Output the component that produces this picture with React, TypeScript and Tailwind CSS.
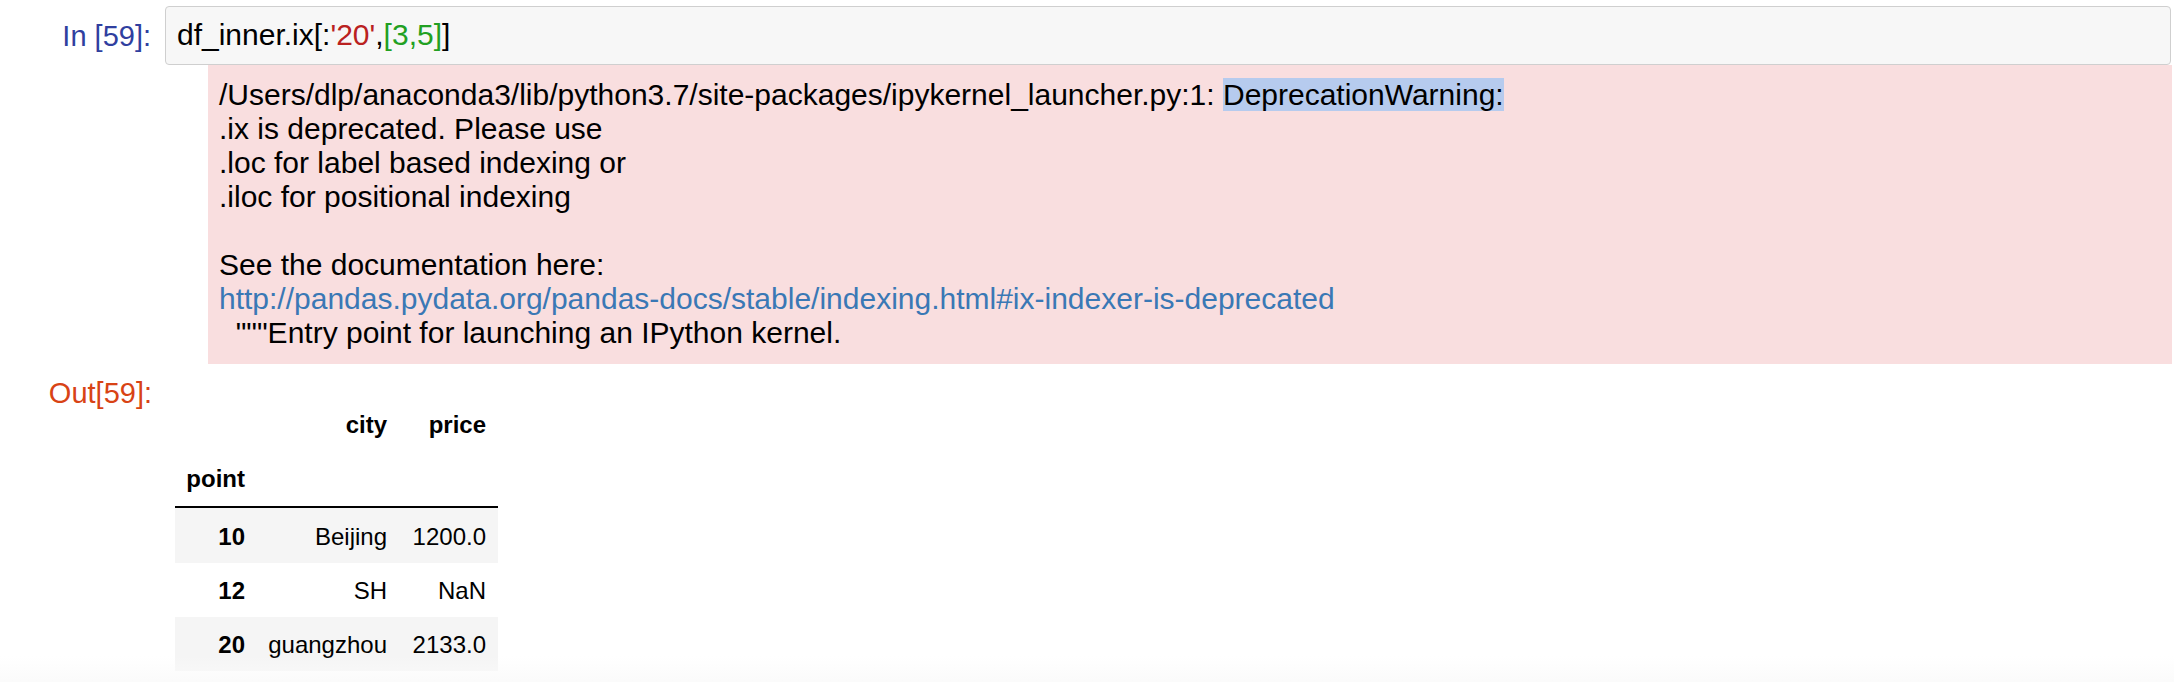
import React from "react";

const rows = [
  { idx: "10", city: "Beijing", price: "1200.0", bg: "bg-[#f5f5f5]", h: "h-[55px]" },
  { idx: "12", city: "SH", price: "NaN", bg: "bg-white", h: "h-[54px]" },
  { idx: "20", city: "guangzhou", price: "2133.0", bg: "bg-[#f5f5f5]", h: "h-[54px]" },
];

export default function App() {
  return (
    <div className="relative w-[2174px] h-[682px] overflow-hidden bg-white text-black font-['Liberation_Sans',Arial,sans-serif]">
      {/* Input cell */}
      <div className="flex pt-[6px] pr-[3px]">
        <div className="w-[165px] shrink-0 pr-[14px] pt-[13px] text-right text-[29px] leading-[34px] text-[#303f9f] whitespace-pre">
          In [59]:
        </div>
        <div className="flex-1 h-[59px] border border-[#cfcfcf] rounded-[4px] bg-[#f7f7f7] flex items-center pl-[11px] pb-[2px] text-[30px] leading-[34px] whitespace-pre">
          <span>df_inner.ix[:</span>
          <span className="text-[#ba2121]">'20'</span>
          <span>,</span>
          <span className="text-[#22a022]">[3,5]</span>
          <span>]</span>
        </div>
      </div>

      {/* stderr output */}
      <div className="pl-[208px] pr-[2px]">
        <div className="bg-[#f9dedf] pt-[13px] pb-[14px] pl-[11px] text-[30px] leading-[34px] whitespace-pre">
          <div>
            /Users/dlp/anaconda3/lib/python3.7/site-packages/ipykernel_launcher.py:1:{" "}
            <span className="bg-[#b6cbee]">DeprecationWarning:</span>
          </div>
          <div>.ix is deprecated. Please use</div>
          <div>.loc for label based indexing or</div>
          <div>.iloc for positional indexing</div>
          <div className="h-[34px]"></div>
          <div>See the documentation here:</div>
          <div className="text-[#3a78b5]">
            http://pandas.pydata.org/pandas-docs/stable/indexing.html#ix-indexer-is-deprecated
          </div>
          <div>{'  """Entry point for launching an IPython kernel.'}</div>
        </div>
      </div>

      {/* Out cell */}
      <div className="flex pt-[12px]">
        <div className="w-[165px] shrink-0 pr-[13px] text-right text-[29px] leading-[34px] text-[#d84315]">
          Out[59]:
        </div>
        <div className="pt-[22px] pl-[10px] text-[24px] leading-[28px]">
          <div className="w-[323px]">
            <div className="flex h-[54px] items-center font-bold">
              <div className="w-[82px] pr-[12px] text-right"></div>
              <div className="w-[142px] pr-[12px] text-right">city</div>
              <div className="w-[99px] pr-[12px] text-right">price</div>
            </div>
            <div className="flex h-[54px] items-center font-bold">
              <div className="w-[82px] pr-[12px] text-right">point</div>
              <div className="w-[142px] pr-[12px] text-right"></div>
              <div className="w-[99px] pr-[12px] text-right"></div>
            </div>
            <div className="h-[2px] bg-black"></div>
            {rows.map((r) => (
              <div key={r.idx} className={`flex items-center pt-[2px] ${r.h} ${r.bg}`}>
                <div className="w-[82px] pr-[12px] text-right font-bold">{r.idx}</div>
                <div className="w-[142px] pr-[12px] text-right">{r.city}</div>
                <div className="w-[99px] pr-[12px] text-right">{r.price}</div>
              </div>
            ))}
          </div>
        </div>
      </div>

      {/* bottom scroll fade */}
      <div className="absolute left-0 right-0 bottom-0 h-[26px] bg-linear-to-b from-[rgba(250,250,250,0)] to-[rgba(250,250,250,0.85)] pointer-events-none"></div>
    </div>
  );
}
